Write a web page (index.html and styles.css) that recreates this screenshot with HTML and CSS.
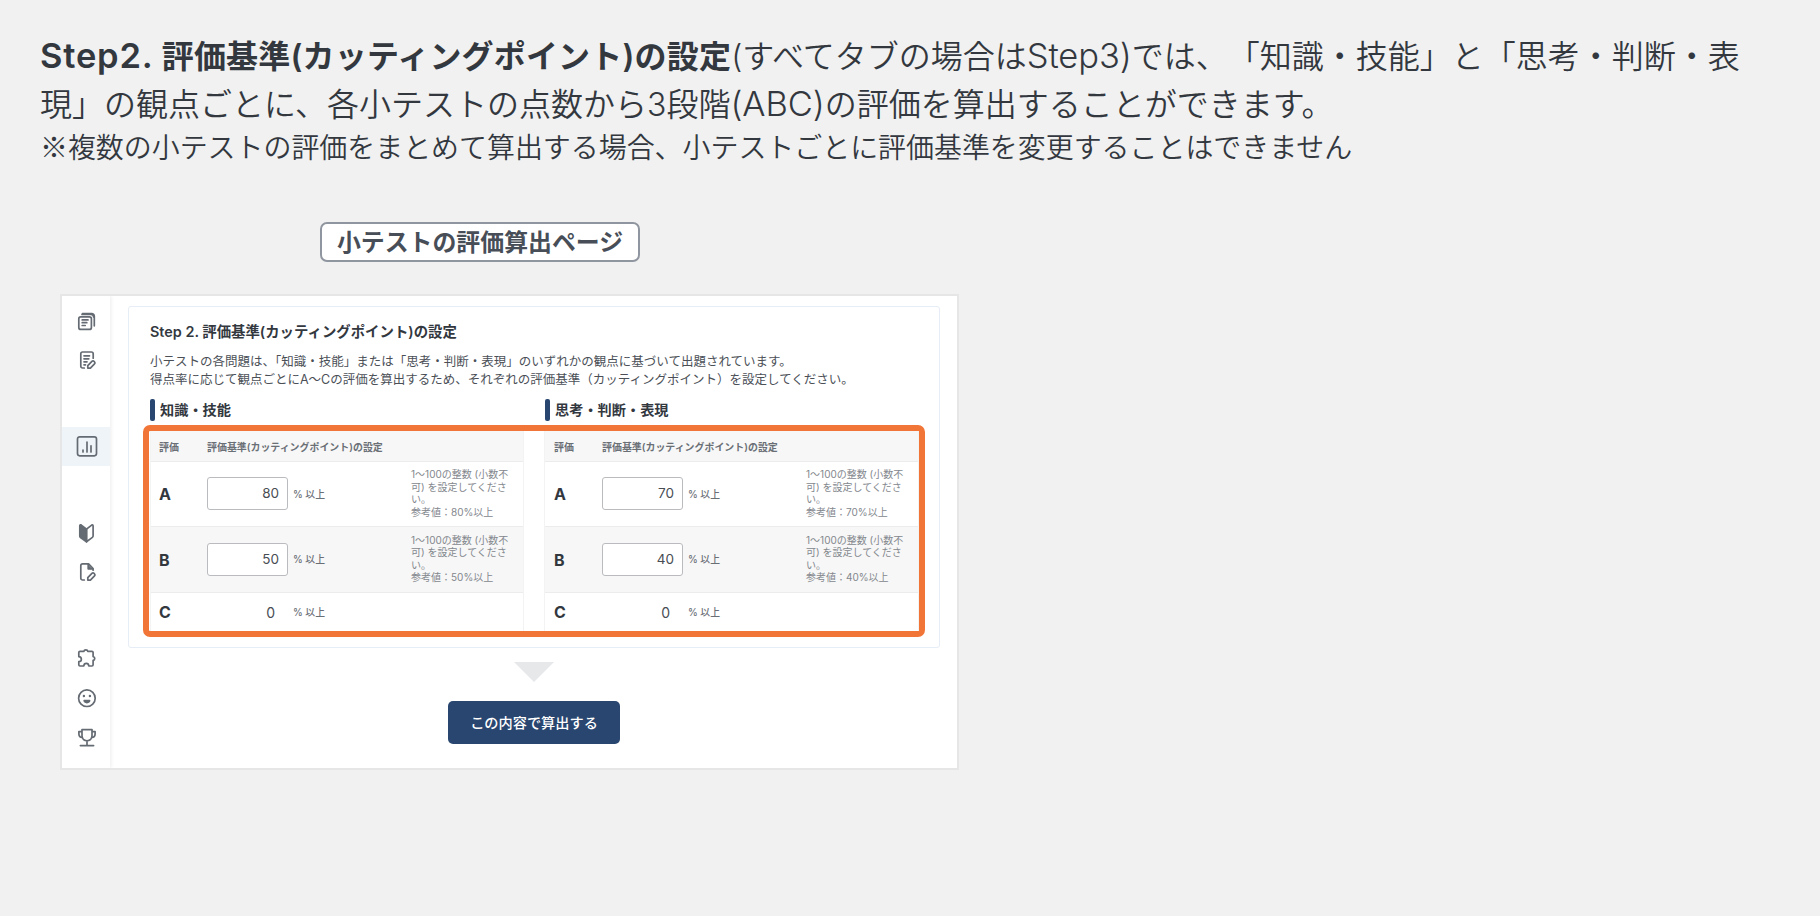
FILE: index.html
```html
<!DOCTYPE html>
<html lang="ja">
<head>
<meta charset="utf-8">
<title>評価基準(カッティングポイント)の設定</title>
<link rel="stylesheet" href="styles.css">
</head>
<body>
<main class="page">
  <p class="lead"><strong><span class="latin">Step2.</span> 評価基準(カッティングポイント)の設定</strong>(すべてタブの場合は<span class="latin">Step3)</span>では、「知識・技能」と「思考・判断・表<br>現」の観点ごとに、各小テストの点数から3段階<span class="latin">(ABC)</span>の評価を算出することができます。</p>
  <p class="note"><span class="mark">※</span>複数の小テストの評価をまとめて算出する場合、小テストごとに評価基準を変更することはできません</p>
  <div class="caption">小テストの評価算出ページ</div>

  <section class="shot">
    <nav class="side">
      <span class="nav"><svg viewBox="0 0 24 24"><rect x="3.8" y="7.8" width="12.6" height="12.6" rx="2"/><path d="M7.5 4.6h9.2a2.6 2.6 0 0 1 2.6 2.6v9.6M7 5.4h9a2.6 2.6 0 0 1 2.6 2.6"/><path d="M7.2 10.9h5.8M7.2 13.7h4.6M7.2 16.5h3" /></svg></span>
      <span class="nav"><svg viewBox="0 0 24 24"><path d="M9.3 20H7.6A1.8 1.8 0 0 1 5.8 18.2V5.8A1.8 1.8 0 0 1 7.6 4h8.8a1.8 1.8 0 0 1 1.8 1.8v4.4M9 7.8h5.5M9 10.8h4.8M9 13.8h3M9 16.8h1.5"/><path d="M12.8 17.7l4.1-4.3a1.5 1.5 0 0 1 2.2 0l.4.4a1.5 1.5 0 0 1 0 2.1l-4.1 4.2h-2.6z"/></svg></span>
      <span class="nav gap on"><svg viewBox="0 0 24 24"><rect x="2.5" y="2.8" width="19" height="19" rx="2.2"/><path d="M8 16v2M12 8v10M16 11.8V18"/></svg></span>
      <span class="nav gap"><svg viewBox="0 0 24 24"><path class="fill" d="M11.5 8.2L6 3.9Q4.8 3.4 4.8 4.8v10.5q0 .8.7 1.3l6 4.2z"/><path d="M11.5 8.2l5.2-4.1q1.4-.7 1.4.8v10.2q0 .8-.7 1.3l-5.9 4.4z"/></svg></span>
      <span class="nav"><svg viewBox="0 0 24 24"><path d="M9.3 20H7.6a1.8 1.8 0 0 1-1.8-1.8V5.7a1.8 1.8 0 0 1 1.8-1.8h6l4.5 4.6v1.7M13.2 4.2v4.6h4.6"/><path d="M12.8 17.7l4.1-4.3a1.5 1.5 0 0 1 2.2 0l.4.4a1.5 1.5 0 0 1 0 2.1l-4.1 4.2h-2.6z"/><path d="M13.8 6.5l1.9 1.9"/></svg></span>
      <span class="nav gap"><svg viewBox="0 0 24 24"><path d="M5 5.4h3.9c.3-2 3.6-2 3.9 0h4.1q1.2 0 1.2 1.2v4c2.2.3 2.2 3.5 0 3.8v4.4q0 1.2-1.2 1.2h-3.1c-.2-3.4-4.8-3.4-5 0H5q-1.2 0-1.2-1.2v-3.1c3.4-.2 3.4-4.8 0-5V6.6Q3.8 5.4 5 5.4z"/></svg></span>
      <span class="nav"><svg viewBox="0 0 24 24"><circle cx="11.9" cy="12.2" r="8.3"/><path class="fill" d="M9.2 14.5h5.4c-.3 2.7-5.1 2.7-5.4 0z"/><path class="eye" d="M8.9 10v.01M14.9 10v.01"/></svg></span>
      <span class="nav"><svg viewBox="0 0 24 24"><path d="M7 4.600h10v6.200c0 6.600-10 6.600-10 0zM7 6.600H3.900V9c0 2 1.400 3.400 3.600 3.600M17 6.600h3.100V9c0 2-1.400 3.400-3.600 3.600M12 15.800v4.600M5.400 20.600h13.200"/></svg></span>
    </nav>

    <div class="content">
      <div class="panel">
        <h1>Step 2. 評価基準(カッティングポイント)の設定</h1>
        <p class="desc">小テストの各問題は、「知識・技能」または「思考・判断・表現」のいずれかの観点に基づいて出題されています。<br>得点率に応じて観点ごとにA〜Cの評価を算出するため、それぞれの評価基準（カッティングポイント）を設定してください。</p>
        <div class="heads"><h2>知識・技能</h2><h2>思考・判断・表現</h2></div>
        <div class="frame">
          <div class="table">
            <div class="row head"><span>評価</span><span>評価基準(カッティングポイント)の設定</span></div>
            <div class="row"><b>A</b><span class="val box">80</span><span class="unit">% 以上</span><span class="hint">1〜100の整数 (小数不<br>可) を設定してくださ<br>い。<br>参考値：80%以上</span></div>
            <div class="row alt"><b>B</b><span class="val box">50</span><span class="unit">% 以上</span><span class="hint">1〜100の整数 (小数不<br>可) を設定してくださ<br>い。<br>参考値：50%以上</span></div>
            <div class="row last"><b>C</b><span class="val zero">0</span><span class="unit">% 以上</span></div>
          </div>
          <div class="table">
            <div class="row head"><span>評価</span><span>評価基準(カッティングポイント)の設定</span></div>
            <div class="row"><b>A</b><span class="val box">70</span><span class="unit">% 以上</span><span class="hint">1〜100の整数 (小数不<br>可) を設定してくださ<br>い。<br>参考値：70%以上</span></div>
            <div class="row alt"><b>B</b><span class="val box">40</span><span class="unit">% 以上</span><span class="hint">1〜100の整数 (小数不<br>可) を設定してくださ<br>い。<br>参考値：40%以上</span></div>
            <div class="row last"><b>C</b><span class="val zero">0</span><span class="unit">% 以上</span></div>
          </div>
        </div>
      </div>
      <div class="arrow"></div>
      <div class="submit">この内容で算出する</div>
    </div>
  </section>
</main>
</body>
</html>
```
FILE: styles.css
```css
* { box-sizing: border-box; margin: 0; padding: 0; }
body { background: #f1f1f1; color: #33383f; font-family: Inter, "Noto Sans CJK JP", sans-serif; }
.page { padding: 33px 40px 0; width: 1820px; height: 916px; overflow: hidden; }
.lead { font-size: 32px; line-height: 48px; white-space: nowrap; font-weight: 350; text-spacing-trim: space-all; }
.lead strong { font-weight: 600; letter-spacing: .18px; }
.latin { font-size: 34.5px; line-height: 1; letter-spacing: -.1px; }
.lead strong .latin { letter-spacing: .8px; }
.note { margin-top: -1px; font-size: 27.95px; line-height: 40px; white-space: nowrap; font-weight: 350; }
.mark { font-family: "Noto Sans CJK JP", sans-serif; line-height: 1; }
.caption { width: 320px; height: 40px; margin: 54px 0 0 280px; border: 2px solid #9096a0; border-radius: 7px; background: #fff; color: #484e57; font-size: 23.9px; line-height: 37px; font-weight: 600; text-align: center; white-space: nowrap; }

.shot { display: flex; width: 899px; height: 476px; margin: 32px 0 0 20px; border: 2px solid #e6e6e6; background: #fff; }
.side { width: 48px; padding-top: 5px; box-shadow: 1px 0 4px rgba(0,0,0,.08); clip-path: inset(0 -6px 0 0); }
.nav { display: flex; height: 39.2px; align-items: center; justify-content: center; }
.nav.gap { margin-top: 47.3px; }
.nav.on { background: #eff4f9; }
.nav svg { width: 24px; height: 24px; margin-left: 2px; fill: none; stroke: #656b73; stroke-width: 1.7; stroke-linecap: round; stroke-linejoin: round; }
.nav .fill { fill: #656b73; }
.nav .eye { stroke-width: 2.4; }

.content { flex: 1; padding: 10px 17px 0 18px; }
.panel { height: 342px; padding: 16px 14px 0; border: 1px solid #e6edf6; border-radius: 3px; }
h1 { margin-left: 7px; font-size: 14.4px; line-height: 18px; font-weight: 600; white-space: nowrap; }
.desc { margin: 12px 0 0 7px; color: #4b5057; font-size: 12.5px; line-height: 18px; white-space: nowrap; }
.heads { display: grid; grid-template-columns: 395px 1fr; margin: 10px 0 4px 7px; }
h2 { display: flex; gap: 5.5px; height: 22px; font-size: 14.2px; line-height: 22px; font-weight: 600; white-space: nowrap; }
h2::before { content: ""; width: 4.5px; height: 22px; border-radius: 2px; background: #28466f; }
.frame { display: flex; gap: 20px; width: 782px; height: 212px; padding-left: 1px; border: 6px solid #f17537; border-radius: 7px; background: #fff; }
.table { width: 374px; border: 1px solid #f3f3f3; border-width: 0 1px; }
.table + .table { width: 375px; }
.row { display: grid; grid-template-columns: 48px 81px 123px 1fr; align-items: center; height: 65px; padding-left: 8px; border-bottom: 1px solid #ececec; white-space: nowrap; }
.table + .table .row { padding-left: 9px; }
.row.head { grid-template-columns: 48px 1fr; height: 31px; background: #f7f7f7; color: #6a6f76; font-size: 9.95px; font-weight: 600; }
.row.alt { background: #f7f7f7; height: 66px; }
.row.last { height: 38px; border: 0; }
.row b { font-size: 16px; font-weight: 700; }
.val { text-align: right; color: #484d54; font-size: 13.5px; }
.box { height: 33px; line-height: 31px; margin-top: -1px; padding-right: 8px; border: 1px solid #b9bbbe; border-radius: 3px; background: #fff; }
.zero { padding-right: 13px; font-size: 14px; }
.unit { margin-top: -1px; padding-left: 5px; color: #6a6f76; font-size: 9.8px; font-weight: 500; }
.hint { margin-top: -2px; color: #83878d; font-size: 10px; line-height: 12.5px; }
.arrow { width: 40px; height: 20px; margin: 14px auto 0; background: #e6e8ea; clip-path: polygon(0 0, 100% 0, 50% 100%); }
.submit { width: 172px; height: 43px; margin: 19px auto 0; border-radius: 5px; background: #28466f; color: #fff; font-size: 14.2px; line-height: 43px; font-weight: 500; text-align: center; }
```
